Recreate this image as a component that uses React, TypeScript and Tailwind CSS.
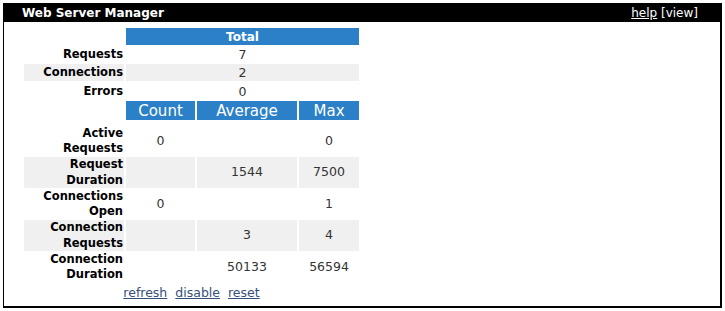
import React from 'react';

type Row = { label: string[]; count?: string; avg?: string; max?: string; h: string };

const totals: { label: string; value: string; h: string }[] = [
  { label: 'Requests', value: '7', h: 'h-[19px]' },
  { label: 'Connections', value: '2', h: 'h-[17px]' },
  { label: 'Errors', value: '0', h: 'h-[20px]' },
];

const stats: Row[] = [
  { label: ['Active', 'Requests'], count: '0', max: '0', h: 'h-[37px]' },
  { label: ['Request', 'Duration'], avg: '1544', max: '7500', h: 'h-[31px]' },
  { label: ['Connections', 'Open'], count: '0', max: '1', h: 'h-[32px]' },
  { label: ['Connection', 'Requests'], avg: '3', max: '4', h: 'h-[31px]' },
  { label: ['Connection', 'Duration'], avg: '50133', max: '56594', h: 'h-[32px]' },
];

const font = { fontFamily: '"DejaVu Sans", Verdana, sans-serif' };

const App: React.FC = () => {
  return (
    <div className="w-[725px] h-[311px] bg-white pt-[3px] pl-[3px]" style={font}>
      <div className="w-[719px] h-[305px] border border-black border-r-2 border-b-2 flex flex-col">
        <div className="h-[18px] bg-black flex items-center justify-between pl-[18px] pr-[22px] text-white text-[12px]">
          <span className="font-bold">Web Server Manager</span>
          <span>
            <a className="underline cursor-pointer">help</a> [view]
          </span>
        </div>

        <table className="table-fixed border-separate border-spacing-x-[2px] border-spacing-y-0 ml-[18px] mt-[6px] w-[339px] text-[12.5px]">
          <colgroup>
            <col className="w-[100px]" />
            <col className="w-[69px]" />
            <col className="w-[100px]" />
            <col className="w-[60px]" />
          </colgroup>
          <tbody>
            <tr className="h-[17px]">
              <td className="p-0" />
              <th colSpan={3} className="p-0 bg-[#2b80c8] text-white text-[12px] font-bold leading-[16px] text-center">
                Total
              </th>
            </tr>
            {totals.map((t, i) => (
              <tr key={t.label} className={t.h}>
                <td className={`p-0 pr-[1px] text-right font-bold text-[11.5px] text-black leading-[15px] ${i === 1 ? 'bg-[#f0f0f0]' : ''}`}>
                  {t.label}
                </td>
                <td colSpan={3} className={`p-0 text-center text-[#333] leading-[15px] ${i === 1 ? 'bg-[#f0f0f0]' : ''}`}>
                  {t.value}
                </td>
              </tr>
            ))}
            <tr className="h-[19px]">
              <td className="p-0" />
              <th className="p-0 bg-[#2b80c8] text-white text-[15px] font-normal leading-[18px] text-center">Count</th>
              <th className="p-0 bg-[#2b80c8] text-white text-[15px] font-normal leading-[18px] text-center">Average</th>
              <th className="p-0 bg-[#2b80c8] text-white text-[15px] font-normal leading-[18px] text-center">Max</th>
            </tr>
            {stats.map((r, i) => {
              const bg = i % 2 === 1 ? 'bg-[#f0f0f0]' : '';
              const pad = i === 0 ? 'pt-[5px]' : '';
              return (
                <tr key={r.label.join(' ')} className={r.h}>
                  <td className={`p-0 ${pad} pr-[1px] text-right font-bold text-[11.5px] text-black leading-[15.5px] ${bg}`}>
                    {r.label[0]}
                    <br />
                    {r.label[1]}
                  </td>
                  <td className={`p-0 ${pad} text-center text-[#333] ${bg}`}>{r.count ?? ''}</td>
                  <td className={`p-0 ${pad} text-center text-[#333] ${bg}`}>{r.avg ?? ''}</td>
                  <td className={`p-0 ${pad} text-center text-[#333] ${bg}`}>{r.max ?? ''}</td>
                </tr>
              );
            })}
            <tr className="h-[19px]">
              <td colSpan={4} className="p-0 text-[#34507a] leading-[18px]">
                <div className="flex justify-center gap-[8px]">
                  <a className="underline cursor-pointer">refresh</a>
                  <a className="underline cursor-pointer">disable</a>
                  <a className="underline cursor-pointer">reset</a>
                </div>
              </td>
            </tr>
          </tbody>
        </table>
      </div>
    </div>
  );
};

export default App;
